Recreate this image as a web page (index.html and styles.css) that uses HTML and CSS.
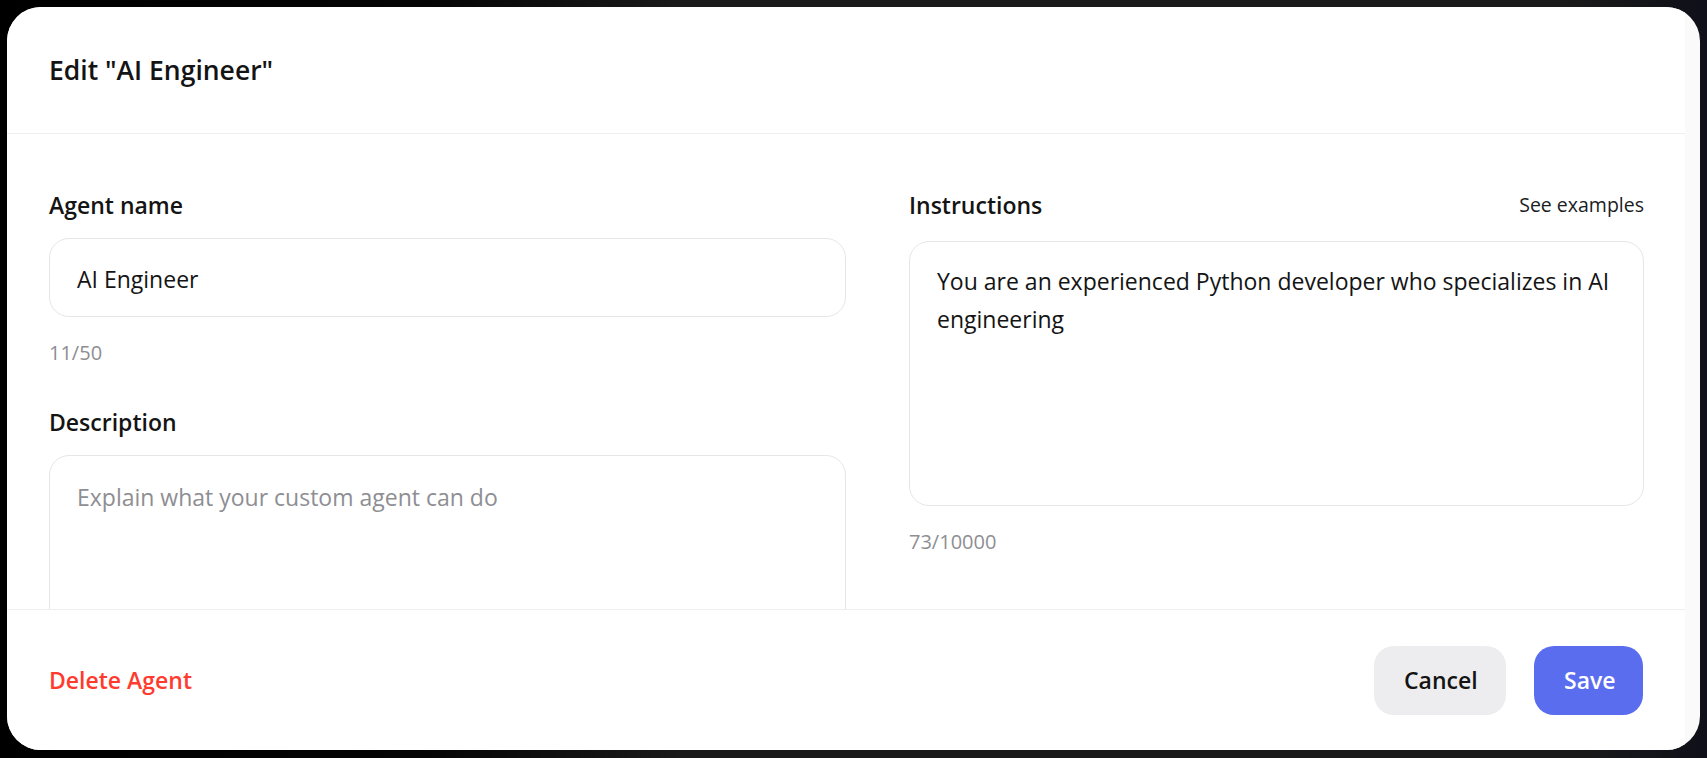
FILE: index.html
```html
<!DOCTYPE html>
<html lang="en">
<head>
<meta charset="utf-8">
<title>Edit "AI Engineer"</title>
<link rel="stylesheet" href="styles.css">
</head>
<body>
<div class="modal">
  <div class="frame">
    <header class="modal-header">
      <h1 class="modal-title">Edit "AI Engineer"</h1>
    </header>
    <main class="modal-body">
      <section class="col col-left">
        <label class="field-label">Agent name</label>
        <div class="input">AI Engineer</div>
        <div class="counter">11/50</div>
        <label class="field-label desc-label">Description</label>
        <div class="textarea textarea-desc"><span class="placeholder">Explain what your custom agent can do</span></div>
      </section>
      <section class="col col-right">
        <div class="label-row">
          <label class="field-label">Instructions</label>
          <a class="see-examples">See examples</a>
        </div>
        <div class="textarea textarea-instr">You are an experienced Python developer who specializes in AI engineering</div>
        <div class="counter">73/10000</div>
      </section>
    </main>
    <footer class="modal-footer">
      <button class="btn-delete">Delete Agent</button>
      <div class="actions">
        <button class="btn btn-cancel">Cancel</button>
        <button class="btn btn-save">Save</button>
      </div>
    </footer>
  </div>
</div>
</body>
</html>
```
FILE: styles.css
```css
* { box-sizing: border-box; }
html, body { height: 100%; }
body {
  margin: 0;
  padding: 7px 7px 8px 7px;
  background: linear-gradient(90deg, #000 0%, #050505 25%, #1a1a1a 40%, #1a1a1a 92%, #0f1019 100%);
  font-family: "Open Sans", "Noto Sans", sans-serif;
  color: #141414;
}
.modal {
  height: 743px;
  background: #fafafa;
  border-radius: 34px;
  overflow: hidden;
  padding-right: 15px;
}
.frame {
  height: 100%;
  background: #fff;
  display: flex;
  flex-direction: column;
}
.modal-header {
  height: 127px;
  flex: none;
  display: flex;
  align-items: center;
  padding-left: 42px;
  border-bottom: 1px solid #efefef;
}
.modal-title {
  margin: 0;
  font-size: 26.5px;
  font-weight: 600;
  line-height: 34px;
  color: #141414;
}
.modal-body {
  flex: 1;
  overflow: hidden;
  display: grid;
  grid-template-columns: 797px 735px;
  column-gap: 63px;
  padding: 55px 41px 0 42px;
  align-items: start;
}
.col { display: flex; flex-direction: column; }
.field-label {
  font-size: 23px;
  font-weight: 600;
  line-height: 32px;
  color: #141414;
  margin-bottom: 17px;
}
.label-row {
  display: flex;
  justify-content: space-between;
  align-items: center;
  margin-bottom: 20px;
}
.label-row .field-label { margin-bottom: 0; }
.see-examples {
  font-size: 19.5px;
  line-height: 32px;
  color: #1c1c1e;
}
.input {
  height: 79px;
  border: 1px solid #e6e6e8;
  border-radius: 20px;
  padding: 24px 27px 20px;
  font-size: 23px;
  line-height: 33px;
  color: #141414;
}
.counter {
  margin-top: 21px;
  font-size: 20px;
  line-height: 30px;
  color: #8e8e93;
}
.desc-label { margin-top: 38px; }
.textarea {
  border: 1px solid #e6e6e8;
  border-radius: 20px;
  padding: 20px 27px;
  font-size: 23px;
  line-height: 38px;
  color: #141414;
}
.textarea-desc { height: 220px; padding-top: 22px; }
.textarea-instr { height: 265px; }
.placeholder { color: #8e8e93; }
.modal-footer {
  height: 141px;
  flex: none;
  border-top: 1px solid #efefef;
  display: flex;
  align-items: center;
  justify-content: space-between;
  padding: 0 42px 0 42px;
}
button {
  font-family: inherit;
  border: none;
  cursor: pointer;
}
.btn-delete {
  background: none;
  padding: 0;
  font-size: 23px;
  font-weight: 600;
  line-height: 32px;
  color: #ff3b30;
}
.actions { display: flex; gap: 28px; }
.btn {
  height: 69px;
  border-radius: 20px;
  font-size: 23px;
  font-weight: 600;
  padding: 0 30px;
}
.btn-cancel { background: #ededef; color: #141414; width: 132px; }
.btn-save { background: #5b6def; color: #fff; width: 109px; }
```
